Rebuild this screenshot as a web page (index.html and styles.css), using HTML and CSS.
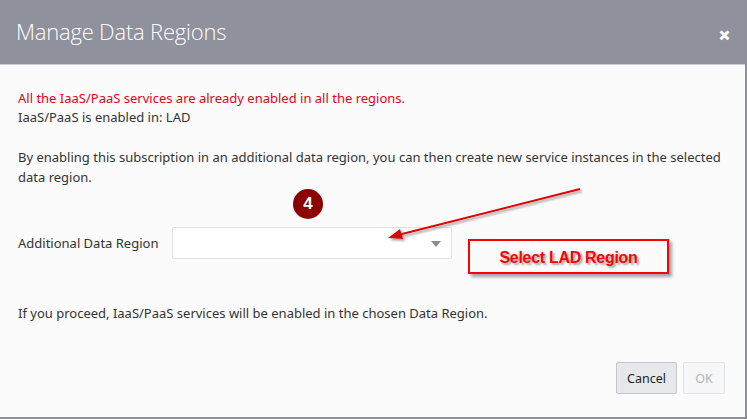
FILE: index.html
```html
<!DOCTYPE html>
<html lang="en">
<head>
  <meta charset="UTF-8" />
  <title>Manage Data Regions</title>
  <link rel="stylesheet" href="styles.css">
</head>
<body>
  <div class="dialog">
    <div class="header">
      <h1 class="title">Manage Data Regions</h1>
      <span class="close">&#x2715;</span>
    </div>

    <div class="content">
      <p class="notice">All the IaaS/PaaS services are already enabled in all the regions.</p>
      <p class="enabled">IaaS/PaaS is enabled in: LAD</p>

      <p class="info">By enabling this subscription in an additional data region, you can then create new service instances in the selected data region.</p>

      <div class="field">
        <label class="label">Additional Data Region</label>
        <div class="select">
          <span class="caret"></span>
        </div>
      </div>

      <p class="proceed">If you proceed, IaaS/PaaS services will be enabled in the chosen Data Region.</p>
    </div>

    <div class="footer">
      <button class="btn cancel">Cancel</button>
      <button class="btn ok" disabled>OK</button>
    </div>

    <!-- tutorial annotations -->
    <span class="step">4</span>
    <div class="callout">Select LAD Region</div>
    <svg class="arrow" width="200" height="60" viewBox="0 0 200 60">
      <defs>
        <filter id="shadow" x="-10%" y="-50%" width="120%" height="200%">
          <feDropShadow dx="2" dy="2" stdDeviation="1.2" flood-color="#555" flood-opacity="0.55" />
        </filter>
      </defs>
      <g filter="url(#shadow)">
        <line x1="196" y1="4" x2="14" y2="50" stroke="#e00000" stroke-width="2" />
        <polygon points="4,53 16,44 19,54" fill="#e00000" />
      </g>
    </svg>
  </div>
</body>
</html>
```

FILE: styles.css
```css
body {
  margin: 0;
  padding: 0;
  background: #ffffff;
  font-family: "Segoe UI", "Noto Sans", sans-serif;
  color: #333333;
}

.dialog {
  position: relative;
  width: 745px;
  height: 417px;
  background: #fbfbfb;
  border-right: 2px solid #8e9099;
  border-bottom: 2px solid #8e9099;
  display: flex;
  flex-direction: column;
}

.header {
  height: 65px;
  background: #8f919c;
  border-bottom: 1px solid #c9ccd6;
  display: flex;
  align-items: center;
  justify-content: space-between;
  padding: 0 15px 0 16px;
  box-sizing: border-box;
}

.title {
  margin: 0 0 3px;
  font-family: "Open Sans", sans-serif;
  font-weight: 300;
  font-size: 22px;
  color: #ffffff;
  letter-spacing: -0.2px;
}

.close {
  color: #ffffff;
  font-size: 13px;
  font-weight: bold;
  margin-top: 5px;
  -webkit-text-stroke: 1px #ffffff;
}

.content {
  flex: 1;
  padding: 24px 10px 0 18px;
  font-size: 13px;
}

.content p {
  margin: 0;
  line-height: 19px;
}

.notice {
  color: #e4001b;
}

.info {
  margin-top: 20px !important;
  line-height: 20px !important;
}

.field {
  display: flex;
  align-items: center;
  margin-top: 40px;
}

.label {
  width: 154px;
}

.select {
  position: relative;
  width: 278px;
  height: 30px;
  background: #ffffff;
  border: 1px solid #dfe1e6;
  border-radius: 2px;
}

.caret {
  position: absolute;
  right: 10px;
  top: 13px;
  border-left: 5px solid transparent;
  border-right: 5px solid transparent;
  border-top: 6px solid #8a8c96;
}

.proceed {
  margin-top: 45px !important;
}

.footer {
  display: flex;
  justify-content: flex-end;
  gap: 6px;
  padding: 0 20px 23px;
}

.btn {
  height: 32px;
  padding: 0 10px;
  font-family: "Segoe UI", "Noto Sans", sans-serif;
  font-size: 12.5px;
  border-radius: 2px;
}

.cancel {
  background: #e6e8ec;
  border: 1px solid #c4c7ce;
  color: #1e1e1e;
}

.ok {
  width: 42px;
  padding: 0;
  background: #f6f7f8;
  border: 1px solid #e3e4e8;
  color: #b3b5bb;
}

.step {
  position: absolute;
  left: 293px;
  top: 189px;
  width: 30px;
  height: 30px;
  border-radius: 50%;
  background: #8b0000;
  color: #ffffff;
  font-family: "Liberation Sans", Arial, sans-serif;
  font-weight: bold;
  font-size: 17px;
  line-height: 30px;
  text-align: center;
}

.callout {
  position: absolute;
  left: 468px;
  top: 239px;
  width: 197px;
  height: 31px;
  border: 2px solid #ff0000;
  box-shadow: 3px 3px 3px rgba(0, 0, 0, 0.35);
  background: #fbfbfb;
  color: #ff0000;
  font-family: "Liberation Sans", Arial, sans-serif;
  font-weight: bold;
  font-size: 16px;
  line-height: 33px;
  text-align: center;
  text-shadow: 2px 2px 2px rgba(0, 0, 0, 0.35);
  letter-spacing: -0.3px;
}

.arrow {
  position: absolute;
  left: 384px;
  top: 185px;
}
```
